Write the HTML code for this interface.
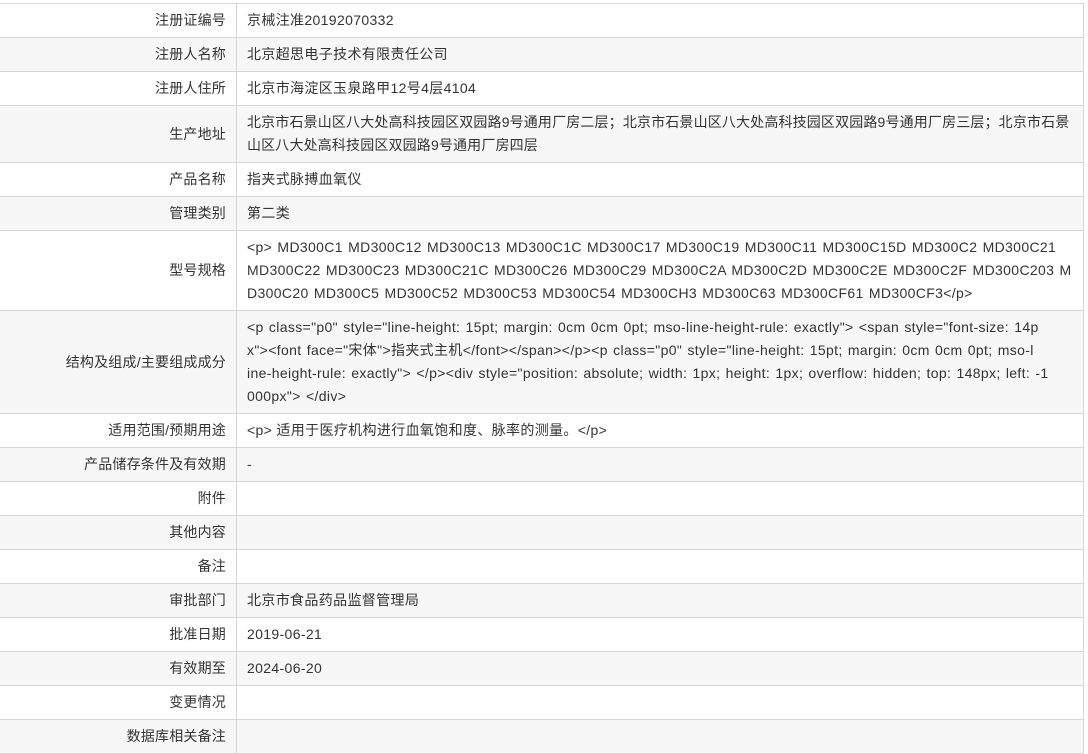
<!DOCTYPE html>
<html><head><meta charset="utf-8"><style>
body{margin:0;background:#fff;font-family:"Liberation Sans","Noto Sans CJK SC",sans-serif;font-size:14px;color:#333;letter-spacing:0.35px}
table{border-collapse:collapse;width:1084px;margin-top:3px;table-layout:fixed}
td{border-top:1px solid #d6d6d6;border-bottom:1px solid #d6d6d6;padding:5px 10px 5px 10px;line-height:23px;height:23px;vertical-align:middle;word-break:break-all}
td.l{width:216px;text-align:right;border-right:1px solid #d6d6d6;letter-spacing:0.2px}
td.v{border-right:1px solid #d6d6d6;padding-right:9px}
td.nw{white-space:nowrap;overflow:hidden;word-spacing:1px}
td.addr{letter-spacing:0.15px}
tr:nth-child(even) td{background:#f7f7f7}
</style></head><body>
<table>
<tr><td class="l">注册证编号</td><td class="v">京械注准20192070332</td></tr>
<tr><td class="l">注册人名称</td><td class="v">北京超思电子技术有限责任公司</td></tr>
<tr><td class="l">注册人住所</td><td class="v">北京市海淀区玉泉路甲12号4层4104</td></tr>
<tr><td class="l">生产地址</td><td class="v nw addr">北京市石景山区八大处高科技园区双园路9号通用厂房二层；北京市石景山区八大处高科技园区双园路9号通用厂房三层；北京市石景<br>山区八大处高科技园区双园路9号通用厂房四层</td></tr>
<tr><td class="l">产品名称</td><td class="v">指夹式脉搏血氧仪</td></tr>
<tr><td class="l">管理类别</td><td class="v">第二类</td></tr>
<tr><td class="l">型号规格</td><td class="v nw">&lt;p&gt; MD300C1 MD300C12 MD300C13 MD300C1C MD300C17 MD300C19 MD300C11 MD300C15D MD300C2 MD300C21<br>MD300C22 MD300C23 MD300C21C MD300C26 MD300C29 MD300C2A MD300C2D MD300C2E MD300C2F MD300C203 M<br>D300C20 MD300C5 MD300C52 MD300C53 MD300C54 MD300CH3 MD300C63 MD300CF61 MD300CF3&lt;/p&gt;</td></tr>
<tr><td class="l">结构及组成/主要组成成分</td><td class="v nw">&lt;p class="p0" style="line-height: 15pt; margin: 0cm 0cm 0pt; mso-line-height-rule: exactly"&gt; &lt;span style="font-size: 14p<br>x"&gt;&lt;font face="宋体"&gt;指夹式主机&lt;/font&gt;&lt;/span&gt;&lt;/p&gt;&lt;p class="p0" style="line-height: 15pt; margin: 0cm 0cm 0pt; mso-l<br>ine-height-rule: exactly"&gt; &lt;/p&gt;&lt;div style="position: absolute; width: 1px; height: 1px; overflow: hidden; top: 148px; left: -1<br>000px"&gt; &lt;/div&gt;</td></tr>
<tr><td class="l">适用范围/预期用途</td><td class="v">&lt;p&gt; 适用于医疗机构进行血氧饱和度、脉率的测量。&lt;/p&gt;</td></tr>
<tr><td class="l">产品储存条件及有效期</td><td class="v">-</td></tr>
<tr><td class="l">附件</td><td class="v">&nbsp;</td></tr>
<tr><td class="l">其他内容</td><td class="v">&nbsp;</td></tr>
<tr><td class="l">备注</td><td class="v">&nbsp;</td></tr>
<tr><td class="l">审批部门</td><td class="v">北京市食品药品监督管理局</td></tr>
<tr><td class="l">批准日期</td><td class="v">2019-06-21</td></tr>
<tr><td class="l">有效期至</td><td class="v">2024-06-20</td></tr>
<tr><td class="l">变更情况</td><td class="v">&nbsp;</td></tr>
<tr><td class="l">数据库相关备注</td><td class="v">&nbsp;</td></tr>
</table>
</body></html>
